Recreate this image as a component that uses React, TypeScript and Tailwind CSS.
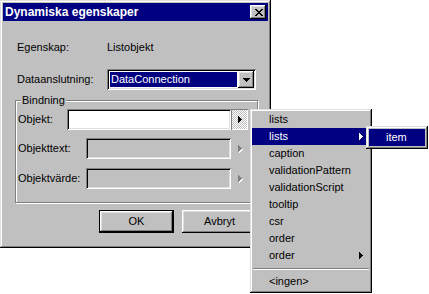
import React from "react";

const raised =
  "shadow-[inset_-1px_-1px_#000,inset_1px_1px_#fff,inset_-2px_-2px_#808080,inset_2px_2px_#dfdfdf]";
const windowBevel =
  "shadow-[inset_-1px_-1px_#000,inset_1px_1px_#dfdfdf,inset_-2px_-2px_#808080,inset_2px_2px_#fff]";
const sunken =
  "shadow-[inset_1px_1px_#808080,inset_-1px_-1px_#fff,inset_2px_2px_#000,inset_-2px_-2px_#dfdfdf]";

function RightArrow({ color = "#000" }: { color?: string }) {
  return (
    <svg width="4" height="7" viewBox="0 0 4 7" shapeRendering="crispEdges">
      <path d="M0 0h1v7h-1z M1 1h1v5h-1z M2 2h1v3h-1z M3 3h1v1h-1z" fill={color} />
    </svg>
  );
}

function DisabledArrow() {
  return (
    <svg width="5" height="8" viewBox="0 0 5 8" shapeRendering="crispEdges">
      <path d="M1 1h1v7h-1z M2 2h1v5h-1z M3 3h1v3h-1z M4 4h1v1h-1z" fill="#fff" />
      <path d="M0 0h1v7h-1z M1 1h1v5h-1z M2 2h1v3h-1z M3 3h1v1h-1z" fill="#808080" />
    </svg>
  );
}

function DownArrow() {
  return (
    <svg width="7" height="4" viewBox="0 0 7 4" shapeRendering="crispEdges">
      <path d="M0 0h7v1h-7z M1 1h5v1h-5z M2 2h3v1h-3z M3 3h1v1h-1z" fill="#000" />
    </svg>
  );
}

function CloseIcon() {
  return (
    <svg width="8" height="7" viewBox="0 0 8 7" shapeRendering="crispEdges">
      <path
        d="M0 0h2v1h-2z M6 0h2v1h-2z M1 1h2v1h-2z M5 1h2v1h-2z M2 2h4v1h-4z M3 3h2v1h-2z M2 4h4v1h-4z M1 5h2v1h-2z M5 5h2v1h-2z M0 6h2v1h-2z M6 6h2v1h-2z"
        fill="#000"
      />
    </svg>
  );
}

const menuItems: { label: string; active?: boolean; sub?: boolean }[] = [
  { label: "lists" },
  { label: "lists", active: true, sub: true },
  { label: "caption" },
  { label: "validationPattern" },
  { label: "validationScript" },
  { label: "tooltip" },
  { label: "csr" },
  { label: "order" },
  { label: "order", sub: true },
];

export default function App() {
  return (
    <div className="relative w-[429px] h-[294px] overflow-hidden bg-white font-['Liberation_Sans',Arial,sans-serif] text-[11px] text-black">
      {/* Dialog window */}
      <div className={`w-[271px] h-[248px] bg-[#c0c0c0] p-[3px] flex flex-col ${windowBevel}`}>
        {/* Title bar */}
        <div className="h-[18px] bg-[#000080] flex items-center justify-between pl-[2px] pr-[2px]">
          <span className="text-white font-bold text-[12px] leading-none">Dynamiska egenskaper</span>
          <div className={`w-[16px] h-[14px] bg-[#c0c0c0] flex items-center justify-center pl-[1px] ${raised}`}>
            <CloseIcon />
          </div>
        </div>

        <div className="flex flex-col pl-[12px]">
          {/* Egenskap */}
          <div className="mt-[19px] h-[14px] flex items-center pl-[2px]">
            <span className="w-[90px]">Egenskap:</span>
            <span>Listobjekt</span>
          </div>

          {/* Dataanslutning */}
          <div className="mt-[15px] h-[21px] flex items-center pl-[2px]">
            <span className="w-[90px]">Dataanslutning:</span>
            <div className={`w-[149px] h-[21px] bg-white p-[2px] flex ${sunken}`}>
              <div className="flex-1 p-[1px]">
                <div className="h-full bg-[#000080] text-white flex items-center pl-[1px]">
                  DataConnection
                </div>
              </div>
              <div className={`w-[16px] h-[17px] bg-[#c0c0c0] flex items-center justify-center ${raised}`}>
                <DownArrow />
              </div>
            </div>
          </div>

          {/* Group box */}
          <div className="relative mt-[10px] w-[243px] h-[103px] border border-[#808080] shadow-[inset_1px_1px_#fff,1px_1px_#fff] pt-[8px] pl-[1px]">
            <span className="absolute left-[5px] top-[-8px] px-[1px] bg-[#c0c0c0] leading-[14px]">Bindning</span>

            <div className="h-[21px] flex items-center">
              <span className="w-[50px] pl-[1px]">Objekt:</span>
              <div className={`w-[164px] h-[21px] bg-white ${sunken}`} />
              <div
                className={`w-[17px] h-[21px] flex items-center justify-center pl-[1px] bg-[repeating-conic-gradient(#fff_0_25%,#c0c0c0_0_50%)] bg-[length:2px_2px] shadow-[inset_1px_1px_#808080,inset_-1px_-1px_#fff]`}
              >
                <RightArrow />
              </div>
            </div>

            <div className="mt-[8px] h-[21px] flex items-center">
              <span className="w-[69px] pl-[1px]">Objekttext:</span>
              <div className={`w-[145px] h-[21px] bg-[#c0c0c0] ${sunken}`} />
              <div className="w-[17px] h-[21px] flex items-center justify-center pl-[2px]">
                <DisabledArrow />
              </div>
            </div>

            <div className="mt-[9px] h-[21px] flex items-center">
              <span className="w-[69px] pl-[1px]">Objektvärde:</span>
              <div className={`w-[145px] h-[21px] bg-[#c0c0c0] ${sunken}`} />
              <div className="w-[17px] h-[21px] flex items-center justify-center pl-[2px]">
                <DisabledArrow />
              </div>
            </div>
          </div>

          {/* Buttons */}
          <div className="mt-[7px] w-[243px] flex justify-end gap-[8px] pr-[1px]">
            <div className="w-[75px] h-[23px] border border-black">
              <div className={`w-full h-full flex items-center justify-center ${raised}`}>OK</div>
            </div>
            <div className={`w-[75px] h-[23px] flex items-center justify-center ${raised}`}>Avbryt</div>
          </div>
        </div>
      </div>

      {/* Context menu */}
      <div className={`absolute left-[250px] top-[109px] w-[122px] h-[184px] bg-[#c0c0c0] p-[2px] flex flex-col ${windowBevel}`}>
        {menuItems.map((it, i) => (
          <div
            key={i}
            className={`h-[17px] flex items-center justify-between pl-[17px] pr-[7px] ${
              it.active ? "bg-[#000080] text-white" : ""
            }`}
          >
            <span>{it.label}</span>
            {it.sub && <RightArrow color={it.active ? "#fff" : "#000"} />}
          </div>
        ))}
        <div className="h-[9px] flex flex-col justify-center px-[1px]">
          <div className="h-[1px] bg-[#808080]" />
          <div className="h-[1px] bg-white" />
        </div>
        <div className="h-[17px] flex items-center pl-[17px]">&lt;ingen&gt;</div>
      </div>

      {/* Submenu */}
      <div className={`absolute left-[366px] top-[126px] w-[62px] h-[23px] bg-[#c0c0c0] p-[3px] ${windowBevel}`}>
        <div className="h-[17px] bg-[#000080] text-white flex items-center pl-[17px]">item</div>
      </div>
    </div>
  );
}
